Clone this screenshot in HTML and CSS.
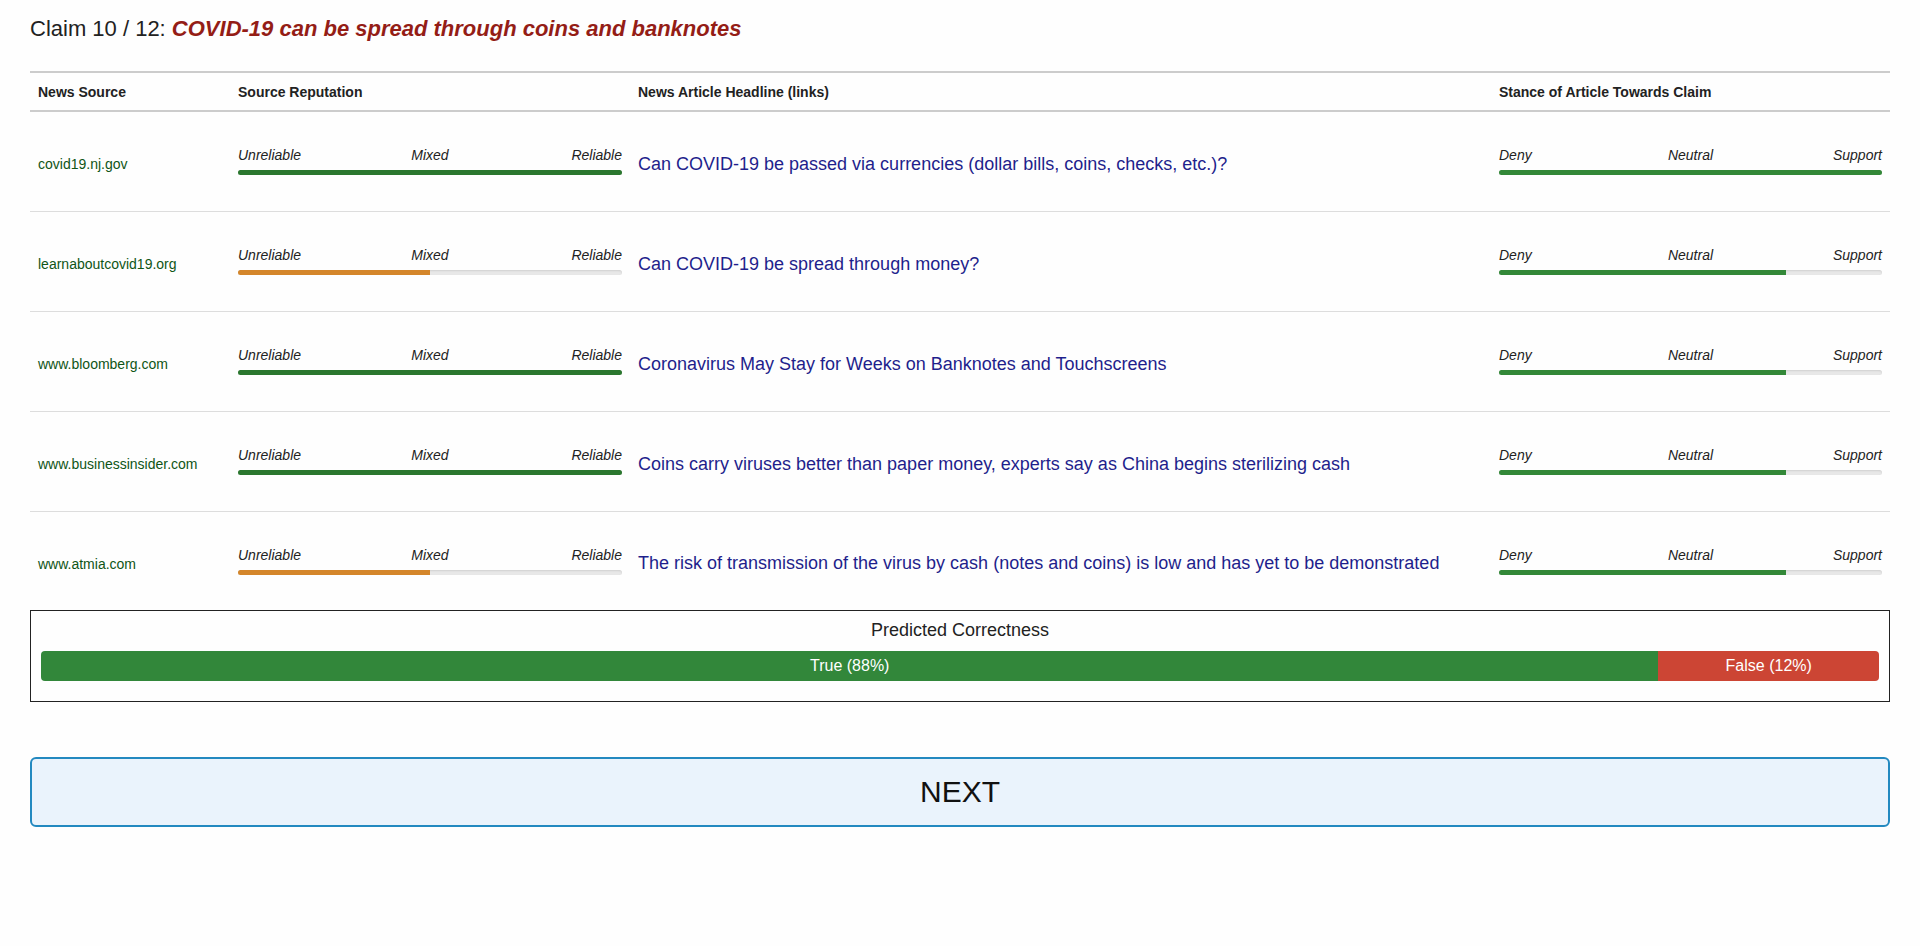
FILE: index.html
```html
<!DOCTYPE html>
<html lang="en">
<head>
<meta charset="utf-8">
<title>Claim 10 / 12</title>
<link rel="stylesheet" href="styles.css">
</head>
<body>
<main class="page">
  <h1 class="claim-title">Claim 10 / 12: <span class="claim-text">COVID-19 can be spread through coins and banknotes</span></h1>

  <table class="news-table">
    <thead>
      <tr>
        <th class="col-source">News Source</th>
        <th class="col-rep">Source Reputation</th>
        <th class="col-headline">News Article Headline (links)</th>
        <th class="col-stance">Stance of Article Towards Claim</th>
      </tr>
    </thead>
    <tbody>
      <tr>
        <td class="source">covid19.nj.gov</td>
        <td class="col-rep">
          <div class="scale-labels"><span>Unreliable</span><span>Mixed</span><span>Reliable</span></div>
          <div class="track"><div class="fill fill-rep-good" style="width:100%"></div></div>
        </td>
        <td class="headline"><a href="#">Can COVID-19 be passed via currencies (dollar bills, coins, checks, etc.)?</a></td>
        <td class="col-stance">
          <div class="scale-labels"><span>Deny</span><span>Neutral</span><span>Support</span></div>
          <div class="track"><div class="fill fill-stance" style="width:100%"></div></div>
        </td>
      </tr>
      <tr>
        <td class="source">learnaboutcovid19.org</td>
        <td class="col-rep">
          <div class="scale-labels"><span>Unreliable</span><span>Mixed</span><span>Reliable</span></div>
          <div class="track"><div class="fill fill-rep-mixed" style="width:50%"></div></div>
        </td>
        <td class="headline"><a href="#">Can COVID-19 be spread through money?</a></td>
        <td class="col-stance">
          <div class="scale-labels"><span>Deny</span><span>Neutral</span><span>Support</span></div>
          <div class="track"><div class="fill fill-stance" style="width:75%"></div></div>
        </td>
      </tr>
      <tr>
        <td class="source">www.bloomberg.com</td>
        <td class="col-rep">
          <div class="scale-labels"><span>Unreliable</span><span>Mixed</span><span>Reliable</span></div>
          <div class="track"><div class="fill fill-rep-good" style="width:100%"></div></div>
        </td>
        <td class="headline"><a href="#">Coronavirus May Stay for Weeks on Banknotes and Touchscreens</a></td>
        <td class="col-stance">
          <div class="scale-labels"><span>Deny</span><span>Neutral</span><span>Support</span></div>
          <div class="track"><div class="fill fill-stance" style="width:75%"></div></div>
        </td>
      </tr>
      <tr>
        <td class="source">www.businessinsider.com</td>
        <td class="col-rep">
          <div class="scale-labels"><span>Unreliable</span><span>Mixed</span><span>Reliable</span></div>
          <div class="track"><div class="fill fill-rep-good" style="width:100%"></div></div>
        </td>
        <td class="headline"><a href="#">Coins carry viruses better than paper money, experts say as China begins sterilizing cash</a></td>
        <td class="col-stance">
          <div class="scale-labels"><span>Deny</span><span>Neutral</span><span>Support</span></div>
          <div class="track"><div class="fill fill-stance" style="width:75%"></div></div>
        </td>
      </tr>
      <tr>
        <td class="source">www.atmia.com</td>
        <td class="col-rep">
          <div class="scale-labels"><span>Unreliable</span><span>Mixed</span><span>Reliable</span></div>
          <div class="track"><div class="fill fill-rep-mixed" style="width:50%"></div></div>
        </td>
        <td class="headline"><a href="#">The risk of transmission of the virus by cash (notes and coins) is low and has yet to be demonstrated</a></td>
        <td class="col-stance">
          <div class="scale-labels"><span>Deny</span><span>Neutral</span><span>Support</span></div>
          <div class="track"><div class="fill fill-stance" style="width:75%"></div></div>
        </td>
      </tr>
    </tbody>
  </table>

  <section class="prediction">
    <div class="prediction-title">Predicted Correctness</div>
    <div class="prediction-bar">
      <div class="seg seg-true" style="width:88%">True (88%)</div>
      <div class="seg seg-false" style="width:12%">False (12%)</div>
    </div>
  </section>

  <button class="next-btn" type="button">NEXT</button>
</main>
</body>
</html>
```

FILE: styles.css
```css
* {
  box-sizing: border-box;
}

html, body {
  margin: 0;
  padding: 0;
  background: #fefefe;
}

body {
  font-family: "Liberation Sans", Arial, sans-serif;
  color: #222;
}

.page {
  padding: 16px 30px 0 30px;
}

.claim-title {
  margin: 0;
  font-size: 22px;
  line-height: 26px;
  font-weight: normal;
  color: #222;
}

.claim-text {
  font-weight: bold;
  font-style: italic;
  color: #941d16;
}

.news-table {
  width: 100%;
  margin-top: 29px;
  border-collapse: collapse;
  table-layout: fixed;
}

.news-table th {
  text-align: left;
  font-size: 14px;
  font-weight: bold;
  color: #222;
  height: 39px;
  padding: 0 8px;
  border-top: 2px solid #cccccc;
  border-bottom: 2px solid #cccccc;
  vertical-align: middle;
}

.col-source { width: 200px; }
.col-rep { width: 400px; }
.col-stance { width: 399px; }

.news-table th.col-stance,
.news-table td.col-stance {
  padding-right: 8px;
}

.news-table td {
  height: 100px;
  padding: 6px 8px 0 8px;
  vertical-align: middle;
  border-bottom: 1px solid #dddddd;
}

.news-table tbody tr:last-child td {
  border-bottom: none;
  height: 99px;
}

.source {
  font-size: 14px;
  color: #0f5516;
}

.headline a {
  font-size: 18px;
  color: #1f1f8c;
  text-decoration: none;
}

.scale-labels {
  display: grid;
  grid-template-columns: 1fr 1fr 1fr;
  font-size: 14px;
  font-style: italic;
  line-height: 20px;
  color: #222;
}

.scale-labels span:nth-child(2) { text-align: center; }
.scale-labels span:nth-child(3) { text-align: right; }

.track {
  height: 5px;
  margin-top: 5px;
  margin-bottom: 8px;
  border-radius: 3px;
  background: #e8e8e8;
  box-shadow: inset 0 1px 2px rgba(0, 0, 0, 0.1);
  overflow: hidden;
}

.fill {
  height: 100%;
}

.fill-rep-good { background: #2b772f; }
.fill-rep-mixed { background: #d4862b; }
.fill-stance { background: #338838; }

.prediction {
  border: 1px solid #222;
  padding: 8px 10px 20px 10px;
}

.prediction-title {
  text-align: center;
  font-size: 18px;
  line-height: 22px;
  color: #222;
}

.prediction-bar {
  display: flex;
  height: 30px;
  margin-top: 10px;
  border-radius: 4px;
  overflow: hidden;
}

.seg {
  color: #fff;
  font-size: 16px;
  line-height: 30px;
  text-align: center;
  white-space: nowrap;
}

.seg-true { background: #32873a; }
.seg-false { background: #cc4534; }

.next-btn {
  display: block;
  width: 100%;
  height: 70px;
  margin-top: 55px;
  border: 2px solid #2389c0;
  border-radius: 6px;
  background: #eaf3fc;
  font-family: "Liberation Sans", Arial, sans-serif;
  font-size: 30px;
  color: #111;
  cursor: pointer;
}
```
